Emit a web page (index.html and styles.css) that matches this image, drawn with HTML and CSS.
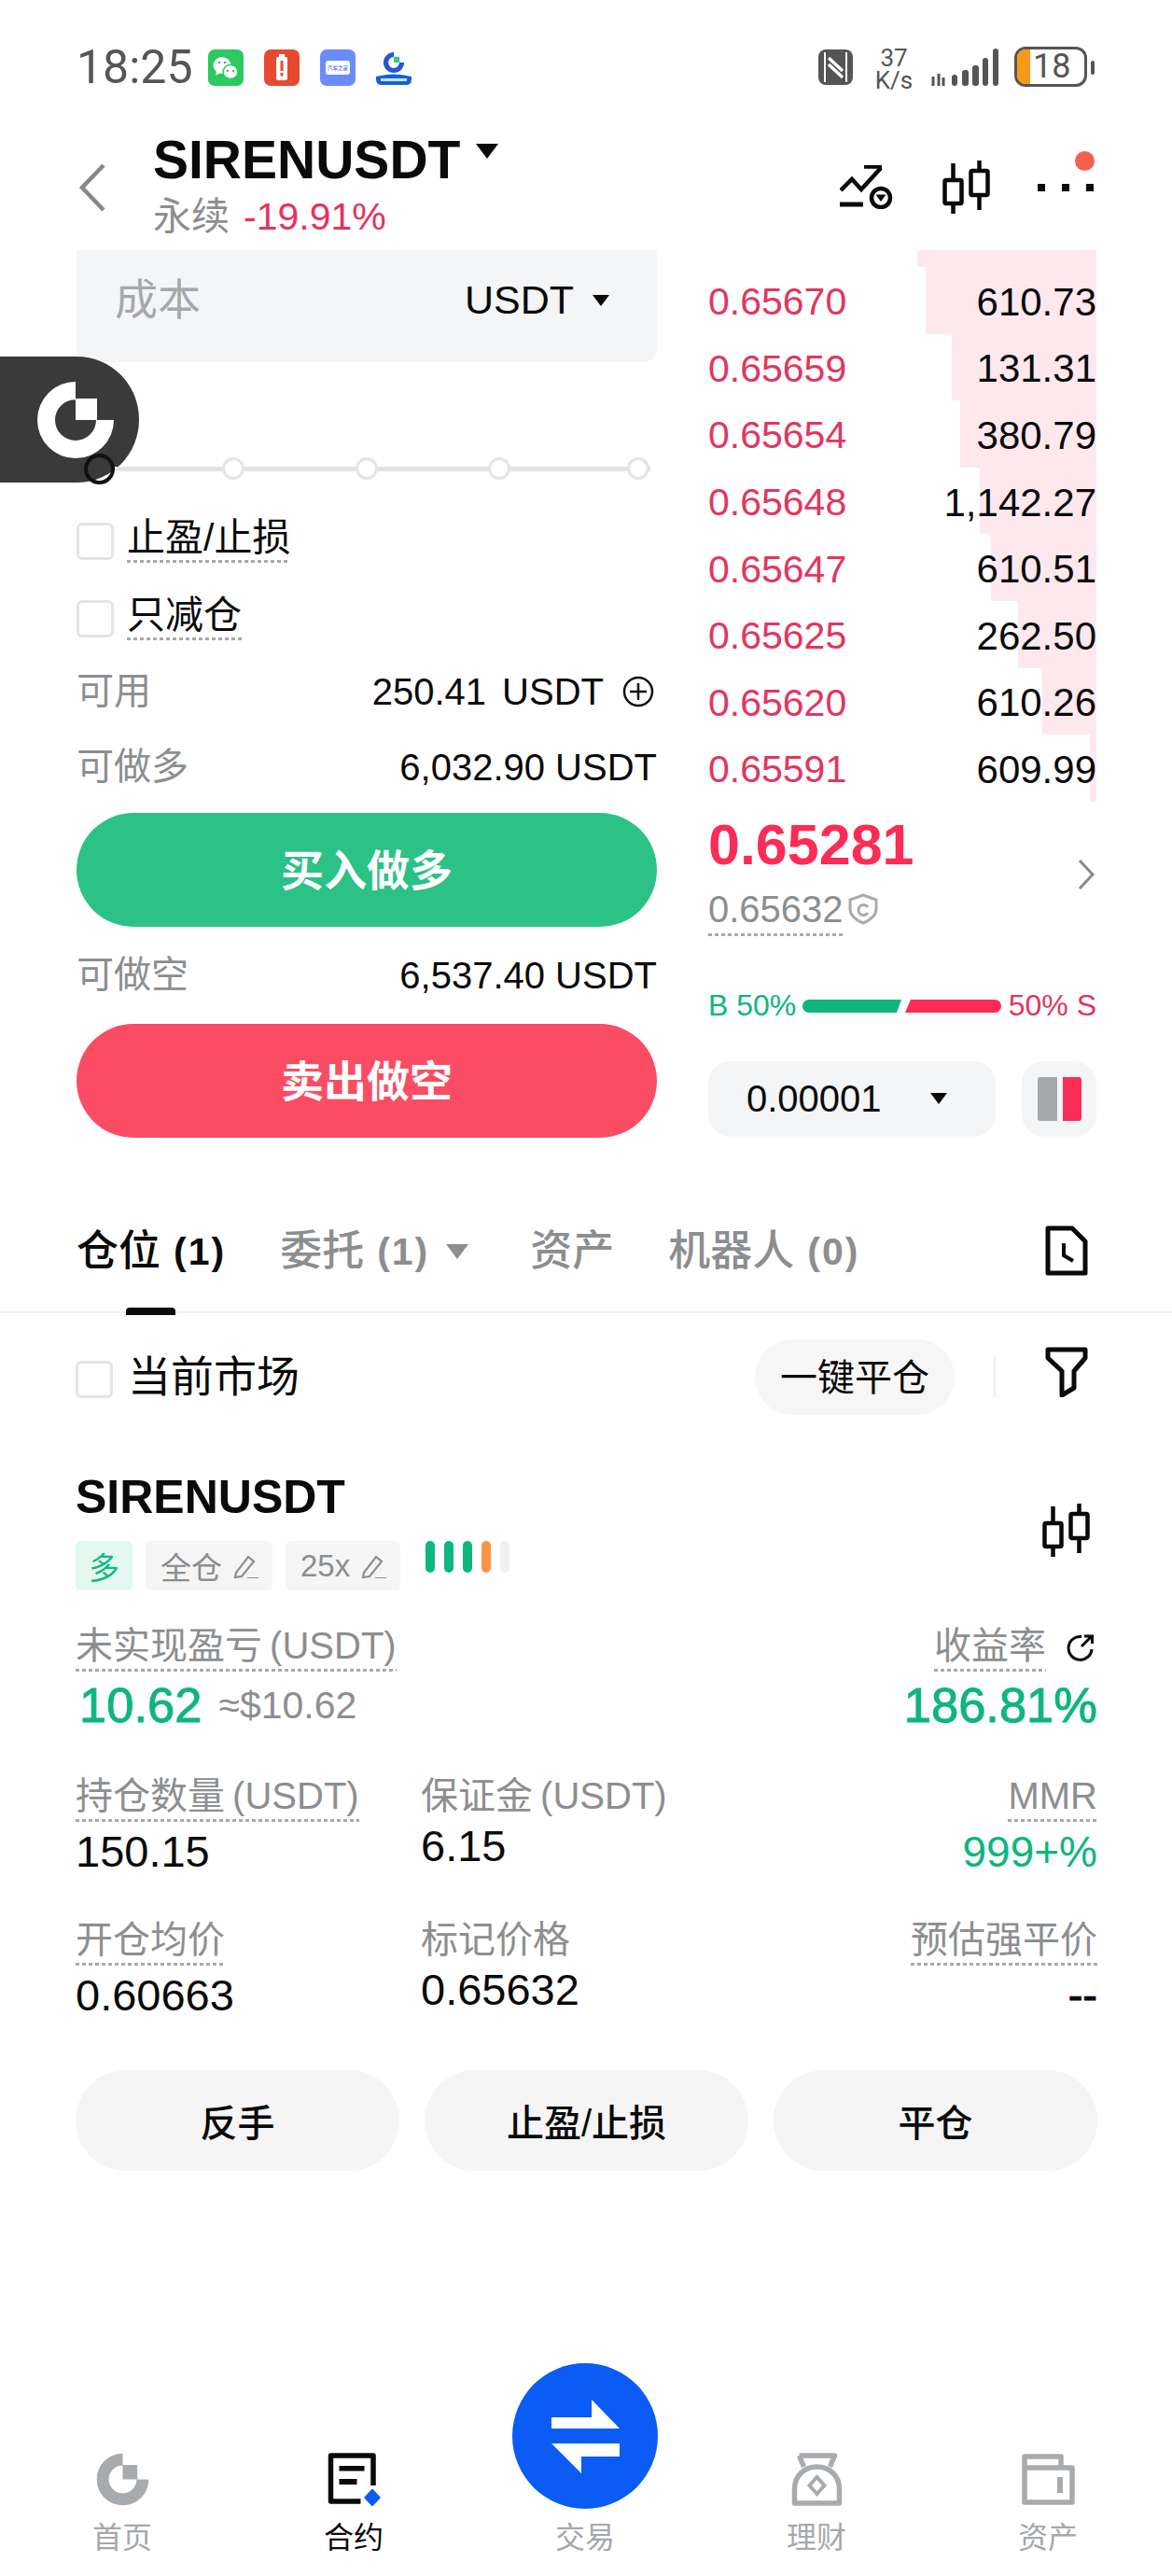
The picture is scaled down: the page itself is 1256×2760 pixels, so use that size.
FILE: index.html
```html
<!DOCTYPE html>
<html lang="zh-CN">
<head>
<meta charset="utf-8">
<title>SIRENUSDT</title>
<link rel="stylesheet" href="styles.css">
</head>
<body>
<div class="page">
  <div class="float-logo">
    <svg class="float-logo-svg" viewBox="-42 -42 84 84"><path fill="#fff" d="M0-41A41 41 0 1 0 41 0H22A22 22 0 1 1 0-22ZM0-23H23V0H0Z"/></svg>
  </div>

  <div class="status">
    <span class="time">18:25</span>
    <svg class="app wechat" viewBox="0 0 38 39"><rect width="38" height="39" rx="7" fill="#2bc95e"/><ellipse cx="15" cy="17" rx="9.500" ry="9" fill="#fff"/><path d="M9 23l-1 5 5-3z" fill="#fff"/><ellipse cx="24" cy="24" rx="8" ry="7.500" fill="#fff" stroke="#2bc95e" stroke-width="1.500"/><circle cx="12" cy="14" r="1.300" fill="#2bc95e"/><circle cx="18" cy="14" r="1.300" fill="#2bc95e"/><circle cx="21" cy="23" r="1.200" fill="#2bc95e"/><circle cx="27" cy="23" r="1.200" fill="#2bc95e"/></svg>
    <svg class="app red" viewBox="0 0 38 39"><rect width="38" height="39" rx="7" fill="#e84a30"/><rect x="13" y="8" width="12" height="25" rx="2" fill="#fff"/><rect x="16" y="5" width="6" height="3" fill="#fff"/><rect x="17.500" y="12" width="3" height="11" fill="#e84a30"/><rect x="17.500" y="25" width="3" height="3.500" fill="#e84a30"/></svg>
    <svg class="app blue" viewBox="0 0 38 39"><rect width="38" height="39" rx="7" fill="#6b8cfb"/><rect x="6" y="12" width="26" height="15" rx="3" fill="#fff"/><text class="app-text" x="19" y="21.500" text-anchor="middle">汽车之家</text></svg>
    <svg class="app bitget" viewBox="0 0 38 36"><g transform="translate(19 11) scale(.27)"><path fill="#2456d6" d="M0-41A41 41 0 1 0 41 0H22A22 22 0 1 1 0-22Z"/><path fill="#35c58f" d="M0-23H23V0H0Z"/></g><path d="M0 26q19-5 38 0v3q0 6-6 6H6q-6 0-6-6z" fill="#1262d8"/><rect x="5" y="28" width="28" height="3" fill="#cfe0fa"/></svg>
    <span class="status-space"></span>
    <svg class="nfc" viewBox="0 0 37 38"><rect width="37" height="38" rx="8" fill="#555"/><path d="M7 3v32M30 3v32" stroke="#fff" stroke-width="2"/><path d="M11 9l15 14M11 16l15 14" stroke="#fff" stroke-width="3.500"/></svg>
    <div class="speed"><span>37</span><span>K/s</span></div>
    <svg class="signal" viewBox="0 0 73 40"><path d="M2 30v10M8 27v13M13 31v9" stroke="#555" stroke-width="3"/><g fill="#555"><rect x="22" y="28" width="6" height="12" rx="3"/><rect x="33" y="23" width="7" height="17" rx="3"/><rect x="44" y="18" width="7" height="22" rx="3"/><rect x="55" y="10" width="6" height="30" rx="3"/><rect x="66" y="0" width="6" height="40" rx="3"/></g></svg>
    <div class="battery"><span class="battery-fill"></span><span class="battery-num">18</span></div>
    <span class="battery-nub"></span>
  </div>

  <header class="head">
    <svg class="back" viewBox="0 0 30 52"><path d="M27 2L4 26l23 24" fill="none" stroke="#888" stroke-width="4.500"/></svg>
    <div class="head-titles">
      <div class="head-title"><span>SIRENUSDT</span><i class="tri tri-title"></i></div>
      <div class="head-sub"><span class="muted">永续</span><span class="pct">-19.91%</span></div>
    </div>
    <div class="head-icons">
      <svg class="ic-line" viewBox="0 0 57 47"><g fill="none" stroke="#0a0a0a" stroke-width="4.500"><path d="M1 27L13 15l10 11L44 3M26 1.500h19"/><path d="M0 42h25" stroke-width="5"/><circle cx="44" cy="35" r="10"/></g><path d="M38.500 31.500h11L44 39z" fill="#0a0a0a"/></svg>
      <svg class="ic-candle" viewBox="0 0 52 57"><g fill="none" stroke="#0a0a0a" stroke-width="4.500"><path d="M11.500 3v18M11.500 46v11M39.500 0v11M39.500 37v16"/><rect x="2.500" y="21" width="18" height="25" rx="1.500"/><rect x="30.500" y="11" width="18" height="26" rx="1.500"/></g></svg>
      <div class="more"><i></i><i></i><i></i><b class="more-dot"></b></div>
    </div>
  </header>

  <section class="trade">
    <div class="form">
      <div class="input">
        <span class="input-ph">成本</span>
        <span class="input-unit">USDT<i class="tri tri-unit"></i></span>
      </div>
      <div class="slider">
        <i class="node node-on"></i><i class="node"></i><i class="node"></i><i class="node"></i><i class="node"></i>
      </div>
      <div class="check check-1"><i class="box"></i><span class="dot">止盈/止损</span></div>
      <div class="check check-2"><i class="box"></i><span class="dot">只减仓</span></div>
      <div class="line line-1"><span class="muted">可用</span><span class="avail"><span class="avail-num">250.41 USDT</span><svg class="plus" viewBox="0 0 34 34"><circle cx="17" cy="17" r="15" fill="none" stroke="#111" stroke-width="2.500"/><path d="M17 8v18M8 17h18" stroke="#111" stroke-width="2.500"/></svg></span></div>
      <div class="line line-2"><span class="muted">可做多</span><span>6,032.90 USDT</span></div>
      <button class="cta buy">买入做多</button>
      <div class="line line-3"><span class="muted">可做空</span><span>6,537.40 USDT</span></div>
      <button class="cta sell">卖出做空</button>
    </div>

    <div class="book">
      <div class="asks">
        <div class="ask ask-top"><i class="fill" style="width:192px"></i></div>
        <div class="ask"><i class="fill" style="width:183px"></i><span class="p">0.65670</span><span class="q">610.73</span></div>
        <div class="ask"><i class="fill" style="width:155px"></i><span class="p">0.65659</span><span class="q">131.31</span></div>
        <div class="ask"><i class="fill" style="width:146px"></i><span class="p">0.65654</span><span class="q">380.79</span></div>
        <div class="ask"><i class="fill" style="width:125px"></i><span class="p">0.65648</span><span class="q">1,142.27</span></div>
        <div class="ask"><i class="fill" style="width:113px"></i><span class="p">0.65647</span><span class="q">610.51</span></div>
        <div class="ask"><i class="fill" style="width:84px"></i><span class="p">0.65625</span><span class="q">262.50</span></div>
        <div class="ask"><i class="fill" style="width:58px"></i><span class="p">0.65620</span><span class="q">610.26</span></div>
        <div class="ask"><i class="fill" style="width:7px"></i><span class="p">0.65591</span><span class="q">609.99</span></div>
      </div>
      <div class="mid">
        <div class="mid-left">
          <div class="mid-price">0.65281</div>
          <div class="mid-mark"><span class="dot dot-gray">0.65632</span>
            <svg class="shield" viewBox="0 0 32 34"><path d="M16 2l14 5v10c0 8-7 12-14 15C9 29 2 25 2 17V7z" fill="none" stroke="#a8abae" stroke-width="3"/><path d="M21 15a5.500 5.500 0 1 0 0 6" fill="none" stroke="#a8abae" stroke-width="3"/></svg>
          </div>
        </div>
        <svg class="next" viewBox="0 0 18 32"><path d="M2 1l14 15L2 31" fill="none" stroke="#888" stroke-width="3"/></svg>
      </div>
      <div class="ratio">
        <span class="r-b">B 50%</span>
        <svg class="ratio-bar" viewBox="0 0 213 14"><path d="M7 0H106L101 14H7A7 7 0 0 1 7 0Z" fill="#0db67e"/><path d="M116 0H206A7 7 0 0 1 206 14H110Z" fill="#fb2c56"/></svg>
        <span class="r-s">50% S</span>
      </div>
      <div class="book-ctl">
        <div class="precision"><span>0.00001</span><i class="tri tri-unit"></i></div>
        <div class="layout-btn"><i class="lb-gray"></i><i class="lb-red"></i></div>
      </div>
    </div>
  </section>

  <nav class="tabs">
    <span class="tab tab-on"><span>仓位</span><b>(1)</b></span>
    <span class="tab tab-menu"><span>委托</span><b>(1)</b><i class="tri tri-tab"></i></span>
    <span class="tab"><span>资产</span></span>
    <span class="tab"><span>机器人</span><b>(0)</b></span>
    <svg class="ic-doc" viewBox="0 0 46 54"><path d="M3 3h26l14 14v34H3z" fill="none" stroke="#0a0a0a" stroke-width="5" stroke-linejoin="round"/><path d="M20 19v13l10 6" fill="none" stroke="#0a0a0a" stroke-width="4"/></svg>
  </nav>

  <div class="filter">
    <i class="box box-lg"></i>
    <span class="filter-text">当前市场</span>
    <span class="pill">一键平仓</span>
    <i class="filter-sep"></i>
    <svg class="ic-filter" viewBox="0 0 46 54"><path d="M3 3h40v9L31 26v18l-13 8V26L3 12z" fill="none" stroke="#0a0a0a" stroke-width="5" stroke-linejoin="round"/></svg>
  </div>

  <section class="position">
    <div class="pos-head">
      <div>
        <div class="pos-title">SIRENUSDT</div>
        <div class="tags">
          <span class="tag tag-long">多</span>
          <span class="tag">全仓<svg class="pen" viewBox="0 0 28 26"><path d="M4 20L17 3l6 5L10 24l-7 1zM16 26h12" fill="none" stroke="#8c8e90" stroke-width="2.200"/></svg></span>
          <span class="tag">25x<svg class="pen" viewBox="0 0 28 26"><path d="M4 20L17 3l6 5L10 24l-7 1zM16 26h12" fill="none" stroke="#8c8e90" stroke-width="2.200"/></svg></span>
          <span class="risk"><i></i><i></i><i></i><i class="risk-o"></i><i class="risk-n"></i></span>
        </div>
      </div>
      <svg class="ic-candle" viewBox="0 0 52 57"><g fill="none" stroke="#0a0a0a" stroke-width="4.500"><path d="M11.500 3v18M11.500 46v11M39.500 0v11M39.500 37v16"/><rect x="2.500" y="21" width="18" height="25" rx="1.500"/><rect x="30.500" y="11" width="18" height="26" rx="1.500"/></g></svg>
    </div>

    <div class="stats">
      <div class="cell row-1 wide">
        <div class="lab"><span class="dot dot-gray">未实现盈亏 (USDT)</span></div>
        <div class="val big"><span class="up bold big-num">10.62</span><span class="approx">≈$10.62</span></div>
      </div>
      <div class="cell row-1 right">
        <div class="lab"><span class="dot dot-gray">收益率</span><svg class="share" viewBox="0 0 31 31"><path d="M17 3.500A12.500 12.500 0 1 0 28 17" fill="none" stroke="#0a0a0a" stroke-width="3"/><path d="M17 14L28 3M20 3h8.500v8" fill="none" stroke="#0a0a0a" stroke-width="3"/></svg></div>
        <div class="val big up bold">186.81%</div>
      </div>

      <div class="cell row-2">
        <div class="lab"><span class="dot dot-gray">持仓数量 (USDT)</span></div>
        <div class="val">150.15</div>
      </div>
      <div class="cell row-2 plain">
        <div class="lab"><span>保证金 (USDT)</span></div>
        <div class="val">6.15</div>
      </div>
      <div class="cell row-2 right">
        <div class="lab"><span class="dot dot-gray">MMR</span></div>
        <div class="val up val-mmr">999+%</div>
      </div>

      <div class="cell row-3">
        <div class="lab"><span class="dot dot-gray">开仓均价</span></div>
        <div class="val">0.60663</div>
      </div>
      <div class="cell row-3 plain">
        <div class="lab"><span>标记价格</span></div>
        <div class="val">0.65632</div>
      </div>
      <div class="cell row-3 right">
        <div class="lab"><span class="dot dot-gray">预估强平价</span></div>
        <div class="val bold">--</div>
      </div>
    </div>

    <div class="actions">
      <button class="act">反手</button>
      <button class="act">止盈/止损</button>
      <button class="act">平仓</button>
    </div>
  </section>

  <footer class="nav">
    <div class="nav-item">
      <svg class="nav-ic" viewBox="-42 -42 84 84"><path fill="#a8abae" d="M0-41A41 41 0 1 0 41 0H22A22 22 0 1 1 0-22ZM0-23H23V0H0Z"/></svg>
      <span>首页</span>
    </div>
    <div class="nav-item nav-on">
      <svg class="nav-ic" viewBox="0 0 56 57"><path d="M48.500 35V3H3v49h32" fill="none" stroke="#0a0a0a" stroke-width="5.500" stroke-linejoin="round"/><path d="M12 14h27v5.500H12zM12 28h19v6H12z" fill="#0a0a0a"/><path d="M47.500 39l8.500 9-8.500 9-8.500-9z" fill="#0a5cf5" stroke="#0a5cf5" stroke-linejoin="round"/></svg>
      <span>合约</span>
    </div>
    <div class="nav-item">
      <div class="swap"><svg class="swap-ic" viewBox="0 0 73 79"><path fill="#fff" d="M0 19h43V0l30 31H0zM73 47v14H32v18L0 47z"/></svg></div>
      <span>交易</span>
    </div>
    <div class="nav-item">
      <svg class="nav-ic" viewBox="0 0 54 57"><path d="M3 54V39C3 24 14 15 27 15s24 9 24 24v15z" fill="none" stroke="#a8abae" stroke-width="5.500" stroke-linejoin="round"/><path d="M8 3h38l-5 12M8 3l5 12" fill="none" stroke="#a8abae" stroke-width="5.500" stroke-linejoin="round"/><path d="M27 26l8 9-8 9-8-9z" fill="none" stroke="#a8abae" stroke-width="4"/></svg>
      <span>理财</span>
    </div>
    <div class="nav-item">
      <svg class="nav-ic" viewBox="0 0 57 55"><path d="M3 3h39v12h12v37H3zM3 15h39" fill="none" stroke="#a8abae" stroke-width="5.500" stroke-linejoin="round"/><path d="M38 25h6v17h-6z" fill="#a8abae"/></svg>
      <span>资产</span>
    </div>
  </footer>
</div>
</body>
</html>
```

FILE: styles.css
```css
* { box-sizing: border-box; }
html, body { margin: 0; padding: 0; background: #fff; }
body {
  font-family: "Liberation Sans", "Noto Sans CJK SC", sans-serif;
  color: #0a0a0a;
}
i { display: block; font-style: normal; }
button { font-family: inherit; border: 0; padding: 0; }
.page { position: relative; width: 1256px; height: 2760px; overflow: hidden; }
.muted { color: #8c8e90; }

.dot {
  display: inline-block;
  padding-bottom: 5px;
  background: repeating-linear-gradient(90deg, #a9a9a9 0 4px, transparent 4px 7px) left bottom / 100% 3px no-repeat;
}

.tri { width: 0; height: 0; border-style: solid; border-color: #0a0a0a transparent transparent; }
.tri-title { border-width: 16px 12px 0; margin: 16px 0 0 17px; align-self: flex-start; }
.tri-unit { border-width: 12px 9px 0; }
.tri-tab { border-width: 16px 12px 0; border-top-color: #8c8e90; margin-left: 18px; }

/* floating launcher */
.float-logo {
  position: absolute; left: 0; top: 382px; z-index: 3;
  width: 149px; height: 135px;
  background: #3a3a3a;
  border-radius: 0 67px 67px 0;
  display: flex; align-items: center; justify-content: flex-end;
  padding-right: 26px;
}
.float-logo-svg { width: 84px; height: 84px; }

/* status bar */
.status {
  height: 146px; padding: 50px 83px 0 82px;
  display: flex; align-items: flex-start;
}
.time { font: 400 50px/44px Roboto, sans-serif; color: #555; width: 141px; margin-top: 0; }
.app { width: 38px; height: 39px; margin: 3px 22px 0 0; flex: none; }
.app.bitget { height: 36px; margin-top: 6px; }
.app-text { font-size: 5.500px; font-weight: 700; fill: #6b8cfb; }
.status-space { flex: 1; }
.nfc { width: 37px; height: 38px; margin: 3px 19px 0 0; }
.speed {
  width: 40px; margin: 0 20px 0 5px;
  display: flex; flex-direction: column; align-items: center;
  font: 400 26px/24px Roboto, sans-serif; color: #555;
}
.signal { width: 73px; height: 40px; margin: 2px 16px 0 0; }
.battery {
  position: relative; width: 78px; height: 43px;
  border: 3px solid #555; border-radius: 12px;
  display: flex; align-items: center; overflow: hidden; background: #fff;
}
.battery-fill { width: 14px; height: 100%; background: #f79a1c; flex: none; }
.battery-num { font: 400 36px/37px Roboto, sans-serif; color: #555; margin-left: 3px; }
.battery-nub { width: 4px; height: 15px; background: #555; border-radius: 2px; margin: 15px 0 0 4px; }

/* header */
.head { height: 122px; padding: 0 84px 0 84px; display: flex; align-items: flex-start; }
.back { width: 30px; height: 52px; margin-top: 29px; flex: none; }
.head-titles { margin-left: 50px; flex: 1; }
.head-title { display: flex; align-items: center; font-weight: 700; font-size: 57px; line-height: 66px; margin-top: -8px; }
.head-sub { display: flex; align-items: center; font-size: 41px; line-height: 50px; margin-top: 3px; gap: 15px; }
.pct { color: #e8315f; }
.head-icons { display: flex; align-items: flex-start; margin-top: 26px; }
.ic-line { width: 57px; height: 47px; margin: 5px 53px 0 0; }
.ic-candle { width: 52px; height: 57px; flex: none; }
.head-icons .ic-candle { margin-right: 50px; }
.more { position: relative; display: flex; gap: 18px; padding-top: 25px; width: 60px; }
.more i { width: 8px; height: 8px; background: #0a0a0a; }
.more-dot { position: absolute; right: -1px; top: -10px; width: 21px; height: 21px; border-radius: 50%; background: #f55f50; }

/* trade */
.trade { padding: 0 81px 0 82px; display: grid; grid-template-columns: 622px 416px; column-gap: 55px; }
.input {
  height: 120px; padding: 0 51px 0 41px;
  background: #f4f5f7; border-radius: 0 0 14px 14px;
  display: flex; align-items: center; justify-content: space-between;
}
.input-ph { font-size: 46px; color: #a5a8ab; margin-top: -22px; }
.input-unit { display: flex; align-items: center; font-size: 43px; gap: 20px; margin-top: -13px; }

.slider {
  position: relative; z-index: 4;
  margin: 97px 7px 0 8px; height: 34px;
  display: flex; align-items: center;
  background: linear-gradient(#e4e4e4, #e4e4e4) right center / calc(100% - 33px) 5px no-repeat;
}
.node { width: 24px; height: 24px; border-radius: 50%; background: #fff; border: 3px solid #e4e4e4; margin-left: 118.500px; flex: none; }
.node-on { width: 33px; height: 33px; background: transparent; border: 4px solid #111; margin-left: 0; }
.node-on + .node { margin-left: 115px; }
.node:last-child { margin-left: 125px; }

.check { display: flex; align-items: flex-start; font-size: 41px; line-height: 44px; }
.check-1 { margin-top: 35px; }
.check-2 { margin-top: 34px; }
.box { width: 40px; height: 40px; border: 3px solid #e3e5e7; border-radius: 6px; margin: 6px 14px 0 0; flex: none; background: #fff; }

.line { display: flex; align-items: center; justify-content: space-between; height: 44px; font-size: 40px; }
.line .muted { margin-top: -9px; }
.line-1 { margin-top: 33px; }
.line-2 { margin-top: 37px; }
.line-3 { margin-top: 30px; }
.avail { display: flex; align-items: center; }
.avail-num { word-spacing: 6px; }
.plus { width: 34px; height: 34px; margin: 0 3px 0 20px; }

.cta {
  display: block; width: 100%; height: 122px; border-radius: 61px; padding-bottom: 6px;
  color: #fff; font-size: 46px; font-weight: 700; text-align: center;
}
.buy { background: #2cc185; margin-top: 27px; }
.sell { background: #fa4d63; margin-top: 30px; }

/* book */
.ask {
  position: relative; height: 71.600px; padding-top: 4px;
  display: flex; align-items: center; justify-content: space-between;
  font-size: 41px;
}
.ask-top { height: 18px; padding-top: 0; }
.fill { position: absolute; right: 0; top: 0; bottom: 0; background: #fde8ed; }
.p { position: relative; color: #e2365f; }
.q { position: relative; font-size: 42px; }

.mid { height: 150px; padding-top: 12px; display: flex; align-items: flex-start; justify-content: space-between; }
.mid-price { font-size: 61px; line-height: 68px; font-weight: 700; color: #fb2c56; }
.mid-mark { display: flex; align-items: flex-start; margin-top: 11px; font-size: 40px; line-height: 48px; color: #8c8e90; }
.shield { width: 32px; height: 34px; margin: 7px 0 0 5px; }
.next { width: 18px; height: 32px; margin: 50px 2px 0 0; }

.ratio { height: 48px; display: flex; align-items: center; font-size: 32px; margin-top: 45px; }
.r-b { color: #0fb57e; width: 101px; flex: none; }
.ratio-bar { width: 213px; height: 14px; flex: none; }
.r-s { color: #e0355f; flex: 1; text-align: right; }

.book-ctl { display: flex; justify-content: space-between; margin-top: 35px; }
.precision {
  width: 308px; height: 81px; background: #f4f5f7; border-radius: 24px;
  display: flex; align-items: center; padding-left: 41px; font-size: 40px;
}
.precision span { width: 197px; }
.layout-btn {
  width: 80px; height: 81px; background: #f4f5f7; border-radius: 24px;
  display: flex; align-items: center; justify-content: center; gap: 6px;
}
.lb-gray { width: 21px; height: 47px; background: #a5a8ab; border-radius: 3px 0 0 3px; }
.lb-red { width: 20px; height: 47px; background: #fb2c56; border-radius: 0 3px 3px 0; }

/* tabs */
.tabs {
  height: 188px; padding: 94px 90px 0 82px; border-bottom: 2px solid #f0f0f0;
  display: flex; align-items: flex-start;
  font-size: 45px; line-height: 56px;
}
.tab { position: relative; display: flex; align-items: center; color: #8c8e90; font-weight: 500; margin-right: 58px; }
.tab-menu { margin-right: 66px; }
.tab b { font: 700 41px/56px "Liberation Sans", sans-serif; letter-spacing: 2px; margin-left: 14px; }
.tab-on { color: #0a0a0a; }
.tab-on::after {
  content: ""; position: absolute; left: 53px; bottom: -40px;
  width: 53px; height: 8px; border-radius: 4px 4px 0 0; background: #0a0a0a;
}
.ic-doc { width: 46px; height: 54px; margin: 0 0 0 auto; flex: none; }

/* filter */
.filter { height: 124px; padding: 28px 90px 0 81px; display: flex; align-items: flex-start; }
.box-lg { margin: 23px 16px 0 0; }
.filter-text { font-size: 46px; line-height: 56px; margin: 12px 0 0; flex: 1; }
.pill {
  width: 214px; height: 81px; border-radius: 41px; background: #f6f6f6; padding-bottom: 5px;
  display: flex; align-items: center; justify-content: center; font-size: 40px;
}
.filter-sep { width: 2px; height: 44px; background: #eee; margin: 18px 0 0 42px; }
.ic-filter { width: 46px; height: 54px; margin: 8px 0 0 53px; }

/* position */
.position { padding: 0 80px 0 81px; }
.pos-head { display: flex; align-items: center; justify-content: space-between; padding: 44px 7px 0 0; }
.pos-title { font-size: 50px; line-height: 58px; font-weight: 700; }
.tags { display: flex; align-items: flex-start; gap: 14px; margin-top: 18px; }
.tag {
  height: 53px; padding: 0 15px 0 16px; border-radius: 6px; background: #f5f5f5;
  display: flex; align-items: center; gap: 11px;
  font-size: 33px; color: #8c8e90;
}
.tag-long { background: #e4f8f0; color: #14b985; width: 61px; justify-content: center; padding: 0; }
.pen { width: 28px; height: 26px; }
.risk { display: flex; gap: 10px; margin-left: 13px; }
.risk i { width: 10px; height: 34px; border-radius: 5px; background: #10b67f; }
.risk .risk-o { background: #fb9344; }
.risk .risk-n { background: #eff0f2; }

.stats {
  display: grid; grid-template-columns: 370px 1fr auto;
  margin-top: 36px;
}
.cell.row-1.wide { grid-column: 1 / 3; }
.cell.row-1 { height: 161px; }
.cell.row-2 { height: 154px; }
.cell.row-3 { height: 155px; }
.lab { display: flex; align-items: flex-start; font-size: 40px; line-height: 46px; color: #8c8e90; word-spacing: -3px; }
.val { font-size: 47px; line-height: 52px; margin-top: 6px; }
.val-mmr { font-size: 46px; }
.plain .val { margin-top: 5px; }
.big { font-size: 52.500px; line-height: 60px; display: flex; align-items: center; margin-top: 6px; }
.big-num { margin-left: 4px; }
.right { text-align: right; display: flex; flex-direction: column; align-items: flex-end; }
.up { color: #0fb57e; }
.bold { -webkit-text-stroke: 1px currentColor; }
.approx { font-size: 41px; color: #8c8e90; margin-left: 18px; -webkit-text-stroke: 0; }
.share { width: 31px; height: 31px; margin: 10px 3px 0 21px; }

.actions { display: grid; grid-template-columns: repeat(3, 1fr); column-gap: 27px; margin-top: 8px; }
.act { height: 108px; border-radius: 54px; background: #f5f5f5; color: #0a0a0a; font-size: 40px; font-weight: 500; }

/* bottom nav */
.nav {
  margin-top: 206px; padding: 0 9px 0 7px;
  display: grid; grid-template-columns: repeat(5, 1fr); align-items: end;
}
.nav-item { display: flex; flex-direction: column; align-items: center; font-size: 32px; line-height: 44px; color: #a5a8ab; padding-bottom: 19px; }
.nav-on { color: #0a0a0a; }
.nav-ic { width: 57px; height: 57px; margin-bottom: 12px; }
.swap {
  width: 156px; height: 156px; border-radius: 50%; background: #0a5cf5;
  display: flex; align-items: center; justify-content: center; margin-bottom: 9px;
}
.swap-ic { width: 73px; height: 79px; }
```
